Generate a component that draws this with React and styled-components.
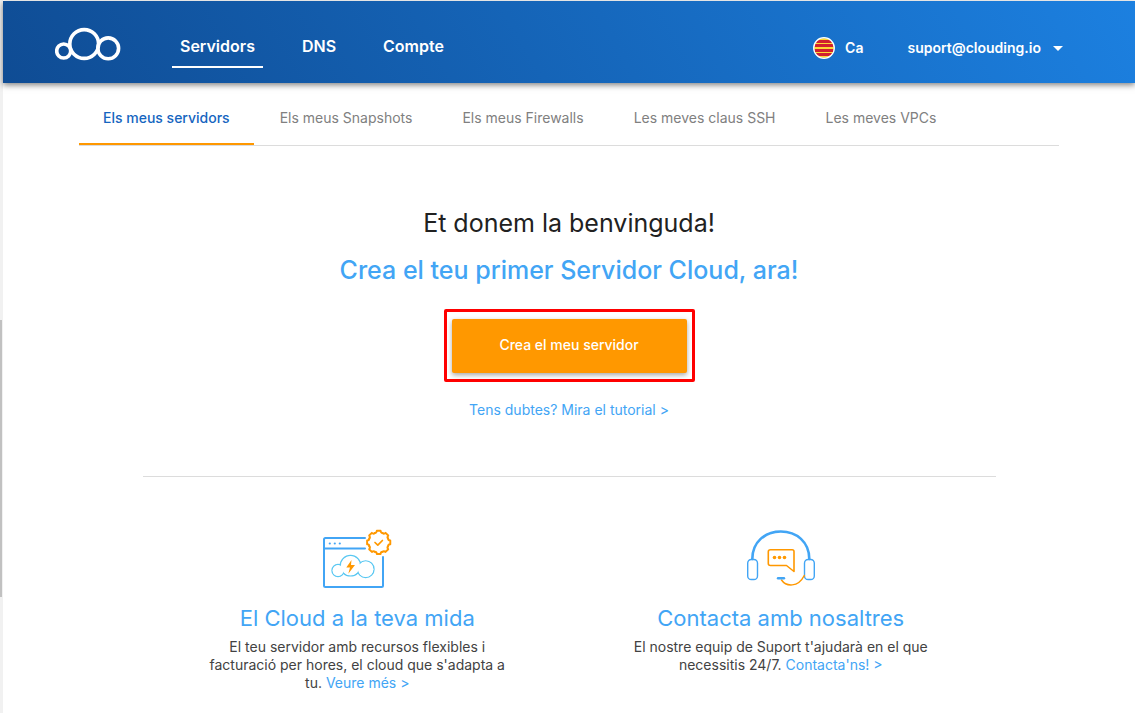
import React from 'react'
import styled, { createGlobalStyle } from 'styled-components'

const GlobalStyle = createGlobalStyle`
    * {
        box-sizing: border-box;
    }
    body {
        margin: 0;
        background-color: #fff;
        color: #212121;
        font-family: Inter, "Liberation Sans", sans-serif;
    }
    h1, h2, h3, p {
        margin: 0;
    }
    a {
        text-decoration: none;
    }
`
const Page = styled.div`
    display: flex;
    min-height: 100vh;
`
const Rail = styled.div`
    flex: none;
    width: 3px;
    padding-top: 320px;
    background-color: #f1f1f1;
`
const RailThumb = styled.div`
    width: 2px;
    height: 277px;
    background-color: #c1c1c1;
`
const Main = styled.div`
    flex: 1;
    padding-top: 1px;
`
const Header = styled.header`
    display: flex;
    align-items: center;
    height: 82px;
    padding: 0 72px 0 52px;
    color: #fff;
    background-image: linear-gradient(60deg, #0f4c94, #1c80e0);
    box-shadow: 0 2px 6px rgba(0, 0, 0, 0.5);
`
const LogoLink = styled.a`
    display: flex;
    margin-right: 51px;
    padding-top: 4px;
`
const Nav = styled.nav`
    display: flex;
    gap: 31px;
    padding-top: 17px;
`
const NavLink = styled.a`
    padding: 0 8px 8px;
    color: #fff;
    font-size: 16px;
    font-weight: 600;
    line-height: 24px;
    border-bottom: 2px solid ${({ $active }) => ($active ? '#fff' : 'transparent')};
`
const Account = styled.div`
    display: flex;
    align-items: center;
    gap: 44px;
    margin-left: auto;
    padding-top: 12px;
`
const MenuButton = styled.button`
    display: flex;
    align-items: center;
    gap: ${({ $gap }) => $gap}px;
    padding: 0;
    border: 0;
    background: none;
    color: #fff;
    font-family: inherit;
    font-size: 14px;
    font-weight: 600;
    line-height: 24px;
    cursor: pointer;
`
const Caret = styled.span`
    border: 5px solid transparent;
    border-top-color: #fff;
    border-bottom: 0;
`
const Tabs = styled.nav`
    display: flex;
    gap: 2px;
    width: 980px;
    max-width: 100%;
    margin: 0 auto;
    border-bottom: 1px solid #dcdcdc;
`
const Tab = styled.a`
    padding: 23px 24px 13px;
    color: ${({ $active }) => ($active ? '#1565c0' : '#808080')};
    font-size: 14px;
    font-weight: ${({ $active }) => ($active ? 500 : 400)};
    line-height: 24px;
    border-bottom: 2px solid ${({ $active }) => ($active ? '#ff9800' : 'transparent')};
`
const Welcome = styled.section`
    display: flex;
    flex-direction: column;
    align-items: center;
    padding: 59px 24px 54px;
`
const Title = styled.h1`
    font-size: 25px;
    font-weight: 400;
    line-height: 36px;
`
const Subtitle = styled.h2`
    margin-top: 11px;
    color: #42a5f5;
    font-size: 25px;
    font-weight: 500;
    line-height: 36px;
`
const Highlight = styled.div`
    margin-top: 21px;
    padding: 7px 5px 6px;
    border: 3px solid #ff0000;
    border-radius: 2px;
`
const CreateButton = styled.button`
    display: block;
    width: 235px;
    height: 54px;
    padding: 0 0 3px;
    border: 0;
    border-radius: 2px;
    background-color: #ff9800;
    box-shadow: 0 2px 5px rgba(0, 0, 0, 0.35);
    color: #fff;
    font-family: inherit;
    font-size: 14px;
    font-weight: 500;
    cursor: pointer;
`
const Link = styled.a`
    color: #42a5f5;
`
const Help = styled.p`
    margin-top: 16px;
    font-size: 14px;
    line-height: 24px;
`
const Features = styled.section`
    display: grid;
    grid-template-columns: 1fr 1fr;
    width: 853px;
    max-width: 100%;
    margin: 0 auto;
    padding: 52px 3px 0;
    border-top: 1px solid #dcdcdc;
`
const Feature = styled.article`
    display: flex;
    flex-direction: column;
    align-items: center;
    text-align: center;
`
const FeatureTitle = styled.h3`
    margin-top: 13px;
    color: #42a5f5;
    font-size: 22px;
    font-weight: 400;
    line-height: 32px;
`
const FeatureText = styled.p`
    max-width: 310px;
    margin-top: 4px;
    color: #424242;
    font-size: 14px;
    line-height: 18px;
`

const Logo = () => (
    <svg width="66" height="34" viewBox="0 0 66 34" fill="none" stroke="#fff" strokeWidth="3.6">
        <circle cx="8.7" cy="24" r="7" />
        <circle cx="29.2" cy="17" r="14.4" />
        <circle cx="53.2" cy="21.3" r="10.4" />
    </svg>
)

const CatalanFlag = () => (
    <svg width="22" height="22" viewBox="0 0 22 22">
        <clipPath id="flag">
            <circle cx="11" cy="11" r="10" />
        </clipPath>
        <g clipPath="url(#flag)">
            <rect width="22" height="22" fill="#fdd835" />
            {[3, 7, 12, 16].map((y) => (
                <rect key={y} y={y} width="22" height="3" fill="#d0202e" />
            ))}
        </g>
        <circle cx="11" cy="11" r="10.3" fill="none" stroke="#fff" strokeWidth="1.3" />
    </svg>
)

const cloudParts = [[16, 41.5, 6], [28.5, 36.7, 10.2], [43.7, 40.2, 8.3]]

const CloudWindow = () => (
    <svg width="70" height="60" viewBox="0 0 70 60" fill="none" strokeLinecap="round" strokeLinejoin="round">
        <path d="M43 9H3.5Q2 9 2 10.5V56.5Q2 58 3.5 58H59.5Q61 58 61 56.5V28M2 19.500H43" stroke="#42a5f5" strokeWidth="2" />
        <g fill="#42a5f5">
            <circle cx="7.8" cy="14.5" r="1.1" />
            <circle cx="12.8" cy="14.5" r="1.1" />
            <circle cx="17.8" cy="14.5" r="1.1" />
        </g>
        {cloudParts.map(([x, y, r]) => (
            <circle key={x} cx={x} cy={y} r={r} stroke="#5ac8f2" strokeWidth="1.4" />
        ))}
        {cloudParts.map(([x, y, r]) => (
            <circle key={x} cx={x} cy={y} r={r - 0.6} fill="#fff" />
        ))}
        <path d="M29.5 31L24.3 38.6H28L26.3 44.8L33 36H29Z" fill="#ff9800" />
        <g stroke="#ff9800">
            {[0, 45, 90, 135, 180, 225, 270, 315].map((turn) => (
                <path
                    key={turn}
                    transform={`rotate(${turn} 56.7 13.4)`}
                    d="M52.8 4Q54.7 4 54.8 1.8H58.6Q58.7 4 60.6 4"
                    strokeWidth="1.9"
                />
            ))}
            <path d="M53 13.5L55.8 16.2L60.4 11.5" strokeWidth="1.7" />
        </g>
    </svg>
)

const Headset = () => (
    <svg width="70" height="60" viewBox="0 0 70 60" fill="none" strokeLinecap="round" strokeLinejoin="round">
        <path d="M6.3 30C6.3 13 19 2.5 34.8 2.5S63.3 13 63.3 30" stroke="#42a5f5" strokeWidth="2.6" />
        <rect x="1.7" y="30.5" width="9.8" height="20" rx="3.6" stroke="#42a5f5" strokeWidth="1.4" />
        <rect x="58.5" y="30.5" width="9.8" height="20" rx="3.6" stroke="#42a5f5" strokeWidth="1.4" />
        <path d="M24.5 20.7H46.2Q48 20.7 48 22.5V42.500L40.5 36.5H24.5Q22.3 36.5 22.3 34.5V22.7Q22.3 20.7 24.5 20.7Z" stroke="#ff9800" strokeWidth="1.6" />
        <g fill="#ff9800">
            <circle cx="28.5" cy="28.5" r="1.8" />
            <circle cx="33.5" cy="28.5" r="1.8" />
            <circle cx="38.5" cy="28.5" r="1.8" />
        </g>
        <path d="M35.5 51C40 57.5 52 59 58.3 46.5" stroke="#ff9800" strokeWidth="1.5" />
        <path d="M32 49.2H38" stroke="#42a5f5" strokeWidth="2.4" />
    </svg>
)

const tabs = ['Els meus servidors', 'Els meus Snapshots', 'Els meus Firewalls', 'Les meves claus SSH', 'Les meves VPCs']

const App = () => {
    return (
        <Page>
            <GlobalStyle />
            <Rail>
                <RailThumb />
            </Rail>
            <Main>
                <Header>
                    <LogoLink href="#" aria-label="Clouding">
                        <Logo />
                    </LogoLink>
                    <Nav>
                        <NavLink href="#" $active>Servidors</NavLink>
                        <NavLink href="#">DNS</NavLink>
                        <NavLink href="#">Compte</NavLink>
                    </Nav>
                    <Account>
                        <MenuButton $gap={10}>
                            <CatalanFlag />
                            Ca
                        </MenuButton>
                        <MenuButton $gap={12}>
                            suport@clouding.io
                            <Caret />
                        </MenuButton>
                    </Account>
                </Header>
                <Tabs>
                    {tabs.map((tab, i) => (
                        <Tab key={tab} href="#" $active={i === 0}>{tab}</Tab>
                    ))}
                </Tabs>
                <Welcome>
                    <Title>Et donem la benvinguda!</Title>
                    <Subtitle>Crea el teu primer Servidor Cloud, ara!</Subtitle>
                    <Highlight>
                        <CreateButton>Crea el meu servidor</CreateButton>
                    </Highlight>
                    <Help>
                        <Link href="#">Tens dubtes? Mira el tutorial &gt;</Link>
                    </Help>
                </Welcome>
                <Features>
                    <Feature>
                        <CloudWindow />
                        <FeatureTitle>El Cloud a la teva mida</FeatureTitle>
                        <FeatureText>
                            El teu servidor amb recursos flexibles i facturació per hores, el cloud que s'adapta a tu. <Link href="#">Veure més &gt;</Link>
                        </FeatureText>
                    </Feature>
                    <Feature>
                        <Headset />
                        <FeatureTitle>Contacta amb nosaltres</FeatureTitle>
                        <FeatureText>
                            El nostre equip de Suport t'ajudarà en el que necessitis 24/7. <Link href="#">Contacta'ns! &gt;</Link>
                        </FeatureText>
                    </Feature>
                </Features>
            </Main>
        </Page>
    )
}

export default App
